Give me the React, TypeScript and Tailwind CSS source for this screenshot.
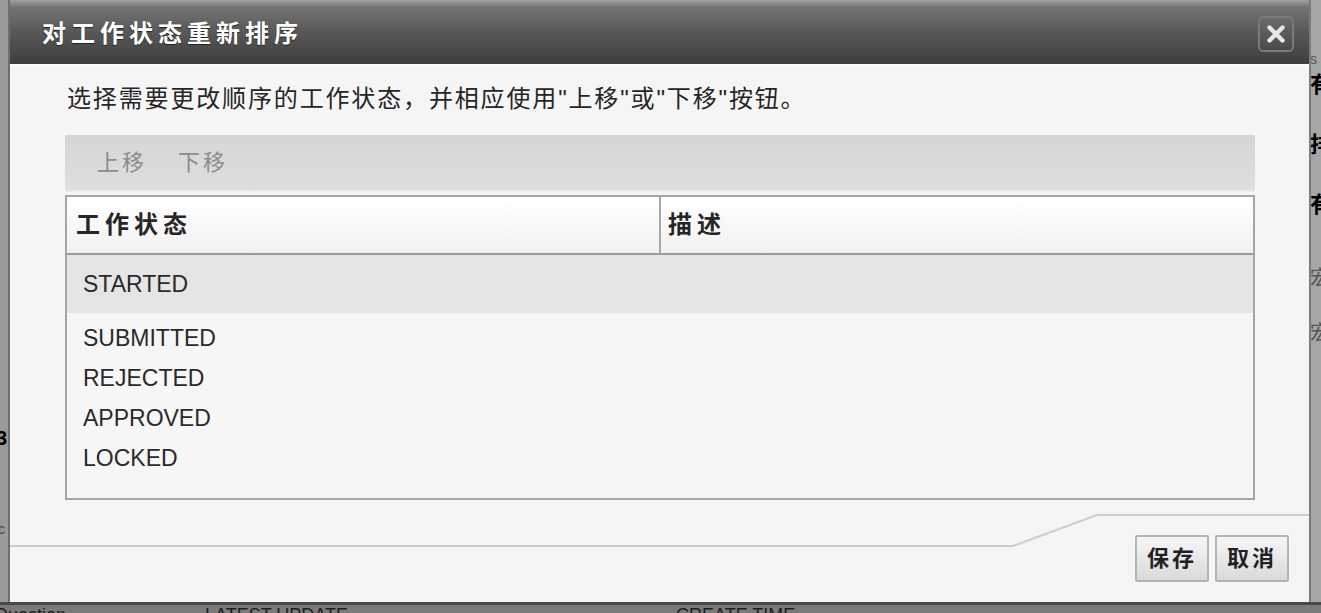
import { X } from "lucide-react";

const statuses = ["SUBMITTED", "REJECTED", "APPROVED", "LOCKED"];

const sideMarks = [
  { top: 52, text: "s", cls: "text-[#555] font-normal text-[14px]" },
  { top: 74, text: "有", cls: "text-black font-bold text-[22px]" },
  { top: 134, text: "排", cls: "text-black font-bold text-[22px]" },
  { top: 194, text: "有", cls: "text-black font-bold text-[22px]" },
  { top: 268, text: "宏", cls: "text-[#555] text-[20px]" },
  { top: 323, text: "宏", cls: "text-[#555] text-[20px]" },
];

function CloseButton() {
  return (
    <button
      type="button"
      className="flex h-[36px] w-[36px] items-center justify-center rounded-[5px] border-2 border-[#7a7a7a] bg-[linear-gradient(to_bottom,#6a6a6a,#4a4a4a)]"
    >
      <X className="h-[26px] w-[26px] text-[#e8e8e8]" strokeWidth={4} />
    </button>
  );
}

function FooterButton({ label }: { label: string }) {
  return (
    <button
      type="button"
      className="flex h-[47px] items-center justify-center rounded-[2px] border-2 border-[#b4b4b4] bg-[linear-gradient(to_bottom,#f6f6f6,#dadada)] px-[10px] text-[22px] font-bold tracking-[3px] text-[#222]"
    >
      {label}
    </button>
  );
}

export default function App() {
  return (
    <div className="relative flex h-[613px] w-[1321px] flex-col overflow-hidden bg-[#8e8e8e] font-['Liberation_Sans','Noto_Sans_CJK_SC',sans-serif]">
      <div className="flex min-h-0 flex-1">
        {/* page behind the dialog, left edge */}
        <div className="relative w-[8px] overflow-hidden bg-[#9a9a9a]">
          <span className="absolute left-[-4px] top-[428px] text-[20px] font-bold leading-none text-black">
            3
          </span>
          <span className="absolute left-[-2px] top-[522px] text-[14px] leading-none text-[#444]">
            c
          </span>
        </div>

        {/* dialog */}
        <div className="flex w-[1301px] flex-col border-l-2 border-[#6e6e6e] bg-[#f5f5f5]">
          <div className="flex h-[64px] items-center justify-between bg-[linear-gradient(to_bottom,#a2a2a2_0px,#747474_7px,#5a5a5a_30px,#3f3f3f_62px)] pl-[32px] pr-[15px] pt-[3px]">
            <h1 className="text-[24px] font-bold tracking-[5px] text-white [text-shadow:0_1px_1px_#222]">
              对工作状态重新排序
            </h1>
            <CloseButton />
          </div>

          <div className="flex flex-1 flex-col border-t-2 border-[#fbfbfb]">
            <p className="pl-[57px] pt-[17px] text-[24px] leading-[32px] tracking-[1.85px] text-[#262626]">
              选择需要更改顺序的工作状态，并相应使用"上移"或"下移"按钮。
            </p>

            <div className="ml-[55px] mt-[20px] w-[1190px]">
              <div className="flex h-[57px] items-center gap-[31px] border-b-2 border-[#ebebeb] bg-[linear-gradient(to_bottom,#d6d6d6,#dedede)] pl-[32px] text-[22px] tracking-[3px] text-[#8c8c8c]">
                <span>上移</span>
                <span>下移</span>
              </div>

              <div className="mt-[3px] h-[305px] border-2 border-[#a6a6a6] bg-[#f6f6f6]">
                <div className="flex h-[58px] border-b-2 border-[#9c9c9c] bg-[linear-gradient(to_bottom,#ffffff,#f1f1f1)] text-[24px] font-bold tracking-[5px] text-[#262626]">
                  <div className="flex w-[594px] items-center border-r-2 border-[#a8a8a8] pl-[9px]">
                    工作状态
                  </div>
                  <div className="flex flex-1 items-center pl-[7px]">描述</div>
                </div>

                <div className="flex h-[58px] items-center bg-[#e5e5e5] pl-[16px] text-[23px] text-[#2a2a2a]">
                  STARTED
                </div>

                <ul className="pt-[5px]">
                  {statuses.map((status) => (
                    <li
                      key={status}
                      className="flex h-[40px] items-center pl-[16px] text-[23px] text-[#2a2a2a]"
                    >
                      {status}
                    </li>
                  ))}
                </ul>
              </div>
            </div>

            <div className="relative flex flex-1 items-start justify-end pr-[20px] pt-[35px]">
              <svg
                className="absolute left-0 top-0 h-full w-full"
                viewBox="0 0 1299 102"
                preserveAspectRatio="none"
              >
                <polyline
                  points="0,46 1003,46 1087,15 1299,15"
                  fill="none"
                  stroke="#cdcdcd"
                  strokeWidth="2"
                />
              </svg>
              <div className="relative flex gap-[6px]">
                <FooterButton label="保存" />
                <FooterButton label="取消" />
              </div>
            </div>
          </div>
        </div>

        {/* page behind the dialog, right edge */}
        <div className="relative flex-1 overflow-hidden border-l-2 border-[#7c7c7c] bg-[#a6a6a6]">
          {sideMarks.map((mark) => (
            <span
              key={mark.top}
              className={`absolute left-[-1px] leading-none ${mark.cls}`}
              style={{ top: mark.top }}
            >
              {mark.text}
            </span>
          ))}
        </div>
      </div>

      {/* page behind the dialog, bottom edge */}
      <div className="relative h-[11px] overflow-hidden border-t-[3px] border-[#4a4a4a] bg-[#7a7a7a]">
        <span className="absolute left-[-6px] top-[1px] text-[18px] leading-none text-[#1e1e1e]">
          Question
        </span>
        <span className="absolute left-[205px] top-[1px] text-[18px] leading-none text-[#1e1e1e]">
          LATEST UPDATE
        </span>
        <span className="absolute left-[676px] top-[1px] text-[18px] leading-none text-[#1e1e1e]">
          CREATE TIME
        </span>
      </div>
    </div>
  );
}
